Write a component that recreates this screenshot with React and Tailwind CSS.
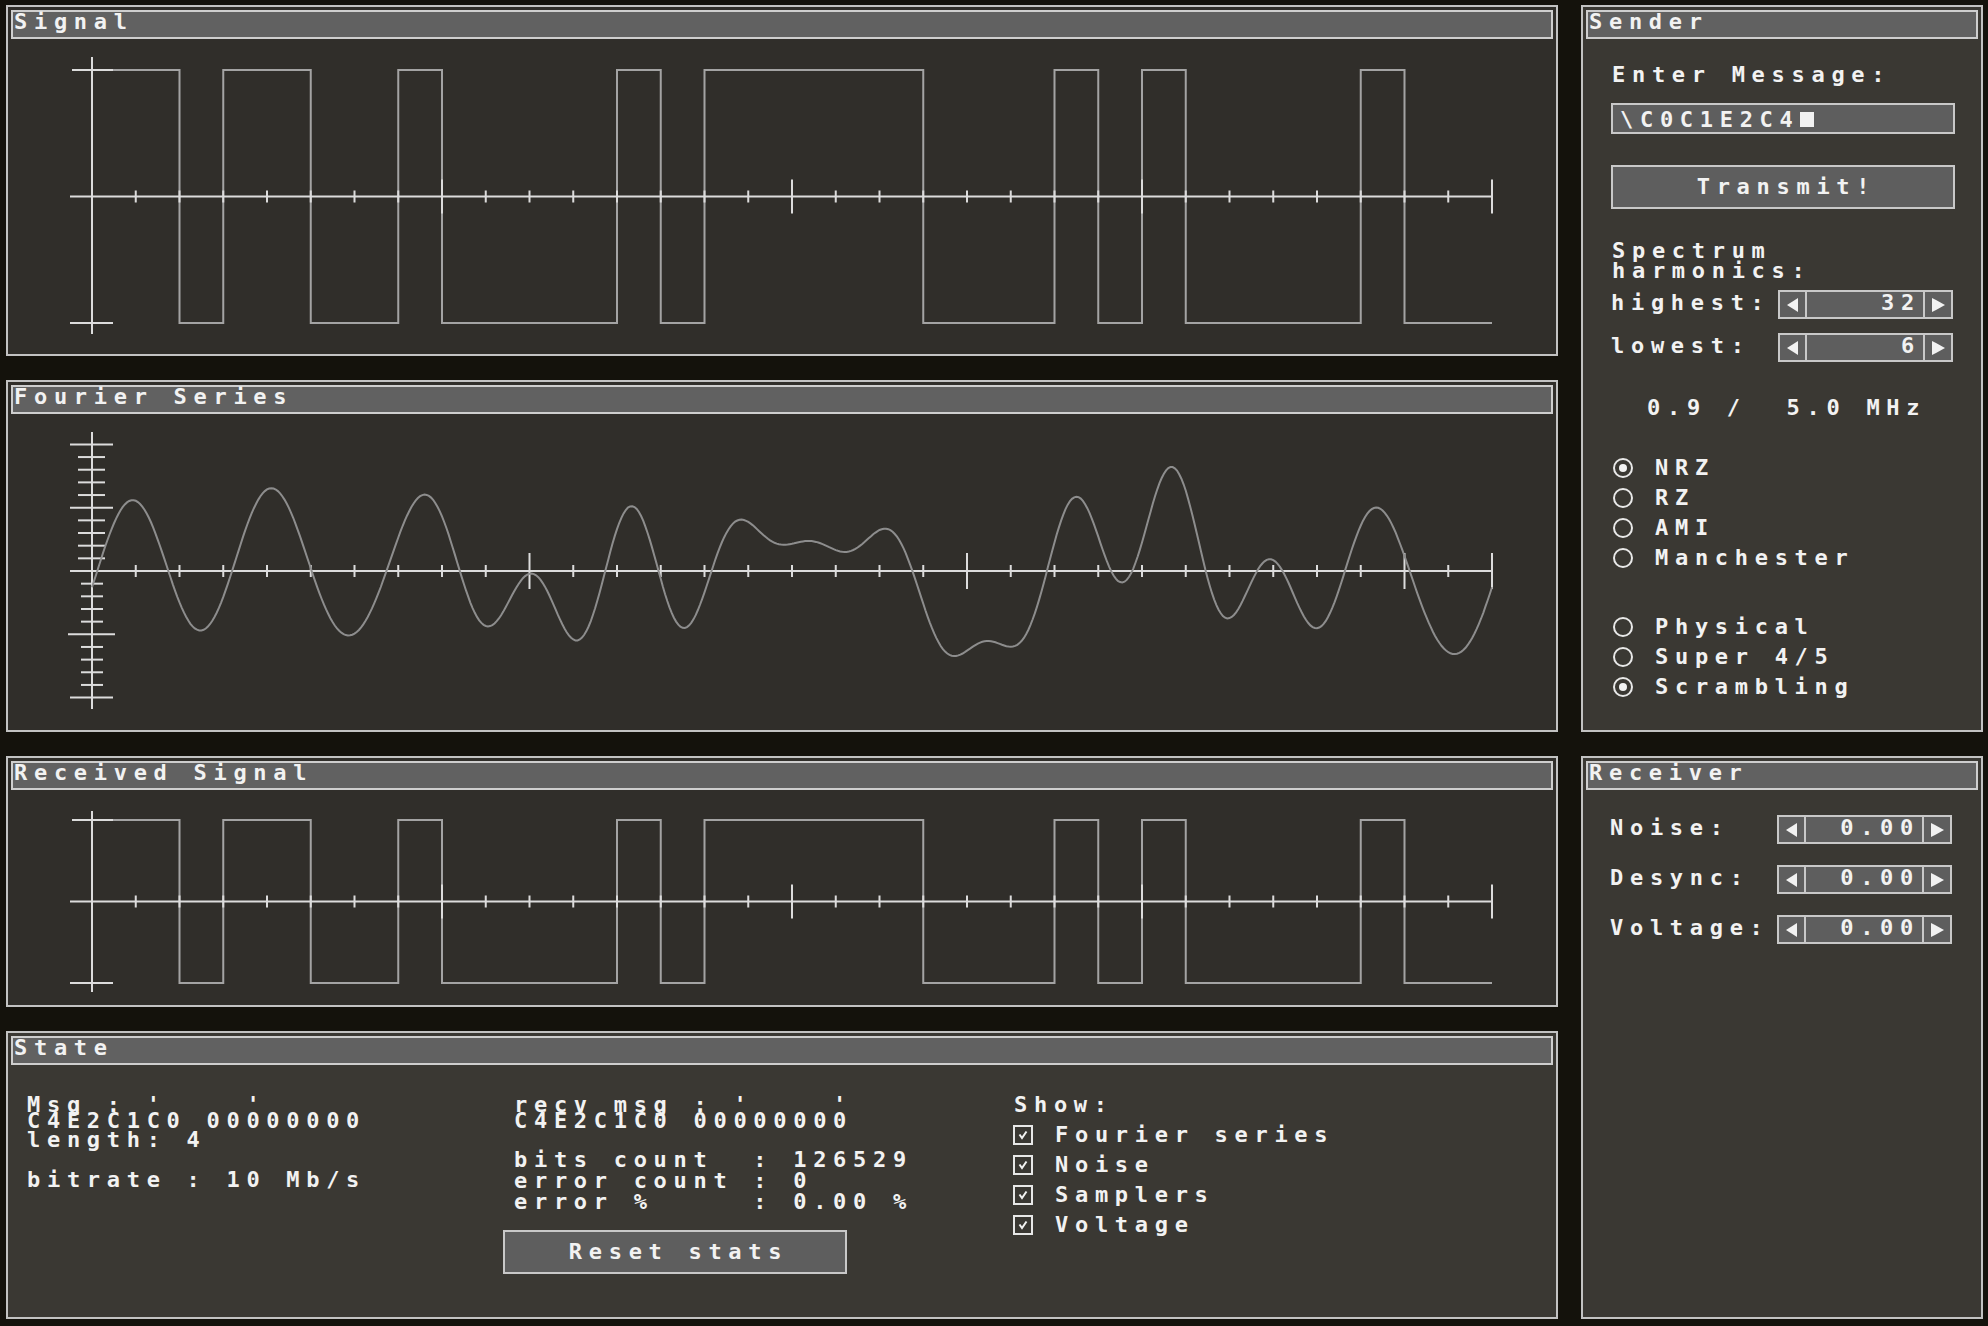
import React from 'react';

const UNIT = 43.75;
const X0 = 92;
const X_END = 1492;
const bits = [1, 1, 0, 1, 1, 0, 0, 1, 0, 0, 0, 0, 1, 0, 1, 1, 1, 1, 1, 0, 0, 0, 1, 0, 1, 0, 0, 0, 0, 1, 0, 0];

function squarePath(hi, lo) {
    let d = `M${X0} ${bits[0] ? hi : lo}`;
    bits.forEach((b, i) => {
        const y = b ? hi : lo;
        const x = X0 + i * UNIT;
        if (i > 0 && b !== bits[i - 1]) d += ` L${x} ${y}`;
        d += ` L${x + UNIT} ${y}`;
    });
    return d;
}

// harmonics 6..32 over a 64 bit period (the message sent twice)
function fourierPath(mid, scale) {
    const P = 64;
    const half = bits.map((v) => (v ? 1 : -1));
    const lv = [...half, ...half];
    const coef = [];
    for (let n = 6; n <= 32; n++) {
        const w = (2 * Math.PI * n) / P;
        let a = 0;
        let s = 0;
        for (let k = 0; k < P; k++) {
            a += (lv[k] * (Math.sin(w * (k + 1)) - Math.sin(w * k))) / w;
            s += (lv[k] * (Math.cos(w * k) - Math.cos(w * (k + 1)))) / w;
        }
        coef.push([w, (a * 2) / P, (s * 2) / P]);
    }
    let d = '';
    for (let i = 0; i <= 640; i++) {
        const t = i / 20;
        let f = 0;
        for (const [w, a, s] of coef) f += a * Math.cos(w * t) + s * Math.sin(w * t);
        d += `${i ? 'L' : 'M'}${(X0 + t * UNIT).toFixed(1)} ${(mid - f * scale).toFixed(1)}`;
    }
    return d;
}

function XAxis({ mid, every, big }) {
    const ticks = [];
    for (let u = 1; u <= 32; u++) {
        const x = X0 + u * UNIT;
        const h = u % every === 0 || u === 32 ? big : 6;
        ticks.push(<line key={u} x1={x} x2={x} y1={mid - h} y2={mid + h} />);
    }
    return (
        <g stroke="#dcdcdc" strokeWidth="2">
            <line x1="70" x2={X_END} y1={mid} y2={mid} />
            {ticks}
        </g>
    );
}

function SignalChart({ y0, h, mid, amp, top, bottom }) {
    const hi = mid - amp;
    const lo = mid + amp;
    return (
        <svg className="block" width="1548" height={h} viewBox={`8 ${y0} 1548 ${h}`}>
            <path d={squarePath(hi, lo)} fill="none" stroke="#a3a3a3" strokeWidth="2" />
            <XAxis mid={mid} every={8} big={17} />
            <g stroke="#dcdcdc" strokeWidth="2">
                <line x1={X0} x2={X0} y1={top} y2={bottom} />
                <line x1="72" x2="113" y1={hi} y2={hi} />
                <line x1="70" x2="113" y1={lo} y2={lo} />
            </g>
        </svg>
    );
}

function FourierChart() {
    const mid = 571;
    const step = 12.66;
    const ticks = [];
    for (let k = -10; k <= 10; k++) {
        if (k === 0) continue;
        const y = mid - k * step;
        let x1 = k > 0 ? 78 : 81;
        let x2 = k > 0 ? 105 : 103;
        if (Math.abs(k) % 5 === 0) {
            x1 = k === -5 ? 68 : 70;
            x2 = k === -5 ? 115 : 113;
        }
        ticks.push(<line key={k} x1={x1} x2={x2} y1={y} y2={y} />);
    }
    return (
        <svg className="block" width="1548" height="316" viewBox="8 414 1548 316">
            <XAxis mid={mid} every={10} big={18} />
            <g stroke="#dcdcdc" strokeWidth="2">
                <line x1={X0} x2={X0} y1="432" y2="709" />
                {ticks}
            </g>
            <path d={fourierPath(mid, step * 5)} fill="none" stroke="#8d8d8d" strokeWidth="2" />
        </svg>
    );
}

function Panel({ title, dark, className, children }) {
    return (
        <div className={`flex flex-col border-2 border-[#c2c2c2] ${dark ? 'bg-[#302e2a]' : 'bg-[#3a3833]'} ${className}`}>
            <div className="mx-[3px] mt-[3px] h-[29px] shrink-0 border-2 border-[#cecece] bg-[#616161] pl-[1px]">
                {title}
            </div>
            <div className="relative flex-1">{children}</div>
        </div>
    );
}

function Stepper({ value }) {
    return (
        <div className="flex h-[29px] w-[175px] border-2 border-[#c8c8c8] bg-[#5e5e5e]">
            <div className="flex w-[27px] items-center justify-center border-r-2 border-[#c8c8c8]">
                <svg width="11" height="14" viewBox="0 0 11 14">
                    <path d="M11 0V14L0 7Z" fill="#f2f2f2" />
                </svg>
            </div>
            <div className="flex-1 pr-[2px] pt-[1px] text-right">{value}</div>
            <div className="flex w-[28px] items-center justify-center border-l-2 border-[#c8c8c8]">
                <svg width="13" height="14" viewBox="0 0 13 14">
                    <path d="M0 0V14L4 12L13 7L4 2Z" fill="#f2f2f2" />
                </svg>
            </div>
        </div>
    );
}

function Radio({ label, checked }) {
    return (
        <div className="flex h-[30px] items-center">
            <span className="ml-[2px] flex h-[20px] w-[20px] items-center justify-center rounded-full border-2 border-[#e8e8e8]">
                {checked && <span className="h-[8px] w-[8px] rounded-full bg-[#f2f2f2]" />}
            </span>
            <span className="ml-[22px]">{label}</span>
        </div>
    );
}

function Check({ label }) {
    return (
        <div className="flex h-[30px] items-center">
            <span className="flex h-[20px] w-[20px] items-center justify-center border-2 border-[#e8e8e8]">
                <svg width="10" height="10" viewBox="0 0 10 10">
                    <path d="M1.5 4.5L4 8L8.5 1.5" fill="none" stroke="#f2f2f2" strokeWidth="2" />
                </svg>
            </span>
            <span className="ml-[22px]">{label}</span>
        </div>
    );
}

function Row({ label, value, className }) {
    return (
        <div className={`flex ${className}`}>
            <div className="w-[167px] pt-[3px]">{label}</div>
            <Stepper value={value} />
        </div>
    );
}

export default function App() {
    return (
        <div className="flex h-[1326px] w-[1988px] gap-[23px] overflow-hidden bg-[#14120c] pl-[6px] pt-[5px] font-['DejaVu_Sans_Mono',monospace] text-[22px] font-bold leading-[20px] tracking-[6.7px] text-[#f2f2f2]">
            <div className="flex w-[1552px] shrink-0 flex-col gap-[24px]">
                <Panel dark title="Signal" className="h-[351px]">
                    <SignalChart y0={39} h={315} mid={196.5} amp={126.5} top={57} bottom={334} />
                </Panel>
                <Panel dark title="Fourier Series" className="h-[352px]">
                    <FourierChart />
                </Panel>
                <Panel dark title="Received Signal" className="h-[251px]">
                    <SignalChart y0={790} h={215} mid={901.5} amp={81.5} top={811} bottom={992} />
                </Panel>
                <Panel title="State" className="h-[288px]">
                    <div className="grid grid-cols-[476px_510px_1fr] pl-[19px] whitespace-pre">
                        <div className="pt-[32px]">
                            <div className="leading-[16px]">
                                <div>{"Msg : '    '"}</div>
                                <div>C4E2C1C0 00000000</div>
                            </div>
                            <div className="mt-[1px]">length: 4</div>
                            <div className="mt-[20px]">bitrate : 10 Mb/s</div>
                        </div>
                        <div className="pt-[32px]">
                            <div className="pl-[11px] leading-[16px]">
                                <div>{"recv msg : '    '"}</div>
                                <div>C4E2C1C0 00000000</div>
                            </div>
                            <div className="mt-[20px] pl-[11px] leading-[21px]">
                                <div>bits count  : 126529</div>
                                <div>error count : 0</div>
                                <div>error %     : 0.00 %</div>
                            </div>
                            <button className="mt-[18px] flex h-[44px] w-[344px] items-center justify-center border-2 border-[#c8c8c8] bg-[#5e5e5e] pl-[7px]">
                                Reset stats
                            </button>
                        </div>
                        <div className="pt-[30px]">
                            <div className="pl-[1px]">Show:</div>
                            <div className="mt-[5px]">
                                <Check label="Fourier series" />
                                <Check label="Noise" />
                                <Check label="Samplers" />
                                <Check label="Voltage" />
                            </div>
                        </div>
                    </div>
                </Panel>
            </div>
            <div className="flex w-[402px] shrink-0 flex-col gap-[24px]">
                <Panel title="Sender" className="h-[727px]">
                    <div className="pl-[28px]">
                        <div className="mt-[26px] pl-[1px]">Enter Message:</div>
                        <div className="mt-[18px] flex h-[31px] w-[344px] items-start border-2 border-[#c8c8c8] bg-[#5e5e5e] pl-[7px] pt-[5px]">
                            <span>{'\\C0C1E2C4'}</span>
                            <span className="mt-[2px] inline-block h-[15px] w-[14px] bg-[#f2f2f2]" />
                        </div>
                        <button className="mt-[31px] flex h-[44px] w-[344px] items-center justify-center border-2 border-[#c8c8c8] bg-[#5e5e5e] pl-[7px]">
                            Transmit!
                        </button>
                        <div className="mt-[32px] pl-[1px]">
                            <div>Spectrum</div>
                            <div>harmonics:</div>
                        </div>
                        <Row label="highest:" value="32" className="mt-[9px]" />
                        <Row label="lowest:" value="6" className="mt-[14px]" />
                        <div className="mt-[36px] whitespace-pre pl-[36px]">0.9 /  5.0 MHz</div>
                        <div className="mt-[35px]">
                            <Radio label="NRZ" checked />
                            <Radio label="RZ" />
                            <Radio label="AMI" />
                            <Radio label="Manchester" />
                        </div>
                        <div className="mt-[39px]">
                            <Radio label="Physical" />
                            <Radio label="Super 4/5" />
                            <Radio label="Scrambling" checked />
                        </div>
                    </div>
                </Panel>
                <Panel title="Receiver" className="h-[563px]">
                    <div className="pl-[27px]">
                        <Row label="Noise:" value="0.00" className="mt-[25px]" />
                        <Row label="Desync:" value="0.00" className="mt-[21px]" />
                        <Row label="Voltage:" value="0.00" className="mt-[21px]" />
                    </div>
                </Panel>
            </div>
        </div>
    );
}
